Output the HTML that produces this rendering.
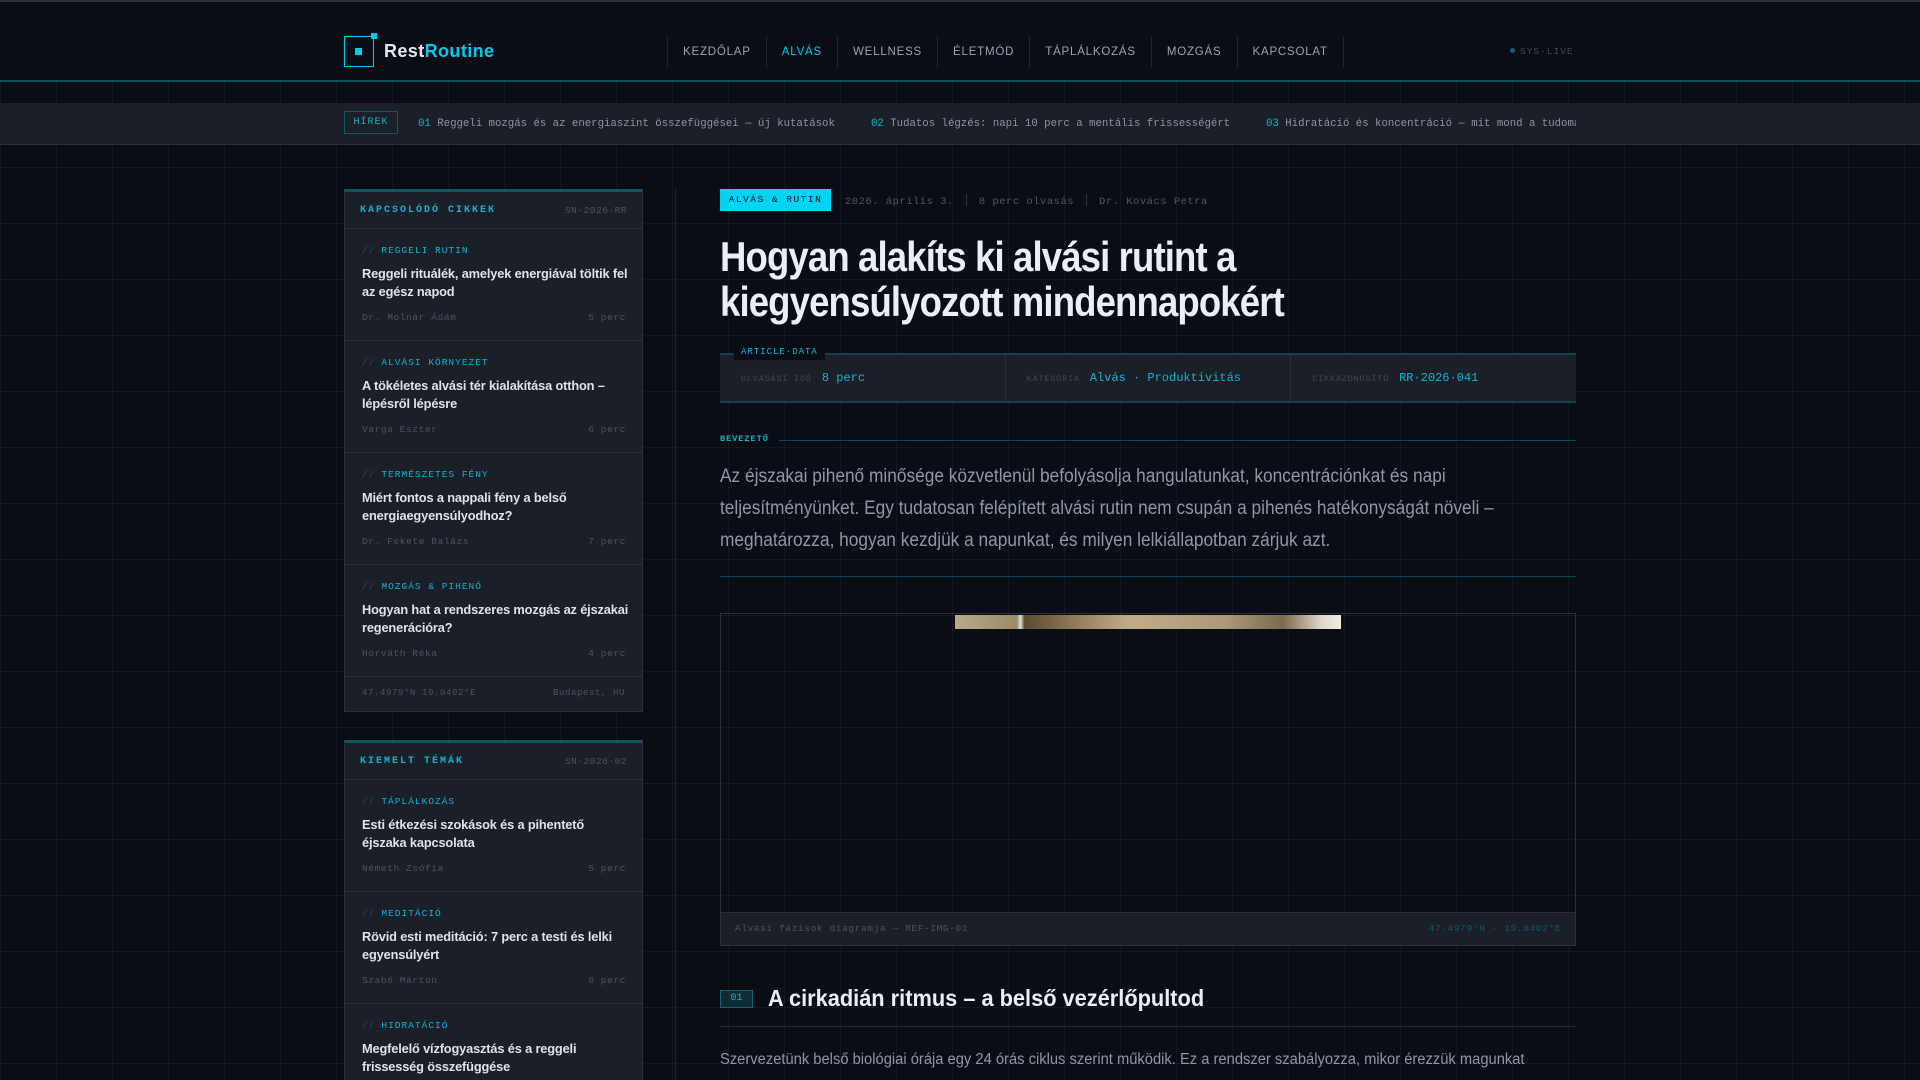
<!DOCTYPE html>
<html><head><meta charset="utf-8">
<style>
*{box-sizing:border-box;margin:0;padding:0}
html,body{width:1920px;height:1080px;overflow:hidden}
body{background-color:#0a0d14;background-image:linear-gradient(90deg,rgba(20,60,70,.28) 1px,transparent 1px),linear-gradient(0deg,rgba(20,60,70,.28) 1px,transparent 1px);background-size:56px 56px;font-family:"Liberation Sans",sans-serif;position:relative;color:#e6e8ef}
.mono{font-family:"Liberation Mono",monospace}
.abs{position:absolute}
.sx{transform-origin:0 0;white-space:nowrap}
#hdr{position:absolute;left:0;top:0;width:1920px;height:82px;background:#0a0d14;border-top:2px solid #2a3338;border-bottom:2px solid #0f4f5c}
.logo{position:absolute;left:344px;top:34px;width:30px;height:31px;border:1.5px solid #00cdec}
.logo:before{content:"";position:absolute;left:10px;top:11px;width:7px;height:7px;background:#00cdec}
.logo:after{content:"";position:absolute;right:-4px;top:-4px;width:6px;height:6px;background:#00cdec}
.brand{position:absolute;left:384px;top:39px;font-size:18px;font-weight:bold;letter-spacing:.4px;color:#e6e8ef}
.brand span{color:#00cdec}
nav{position:absolute;left:667px;top:34px;height:32px;display:flex}
nav a{display:block;height:32px;line-height:32px;padding:0 15px;border-left:1px solid #1e252c;font-size:11.5px;letter-spacing:.8px;color:#9aa4b2;text-decoration:none}
nav a:last-child{border-right:1px solid #1e252c}
nav a.on{color:#00cdec}
.sys{position:absolute;left:1510px;top:44px;font-size:9.5px;letter-spacing:1px;color:#3f4b56}
.sys:before{content:"";display:inline-block;width:5px;height:5px;border-radius:50%;background:#0f6170;margin-right:5px;vertical-align:1px}
#tick{position:absolute;left:0;top:103px;width:1920px;height:42px;background:#1b1f27;border-bottom:1px solid #2a3038}
.hirek{position:absolute;left:344px;top:8px;width:54px;height:23px;border:1px solid #0f5866;color:#12b3d0;font-size:10px;letter-spacing:1px;text-align:center;line-height:21px}
.tk{position:absolute;top:15px;font-size:10.7px;color:#8b95a3;white-space:nowrap}
.tk b{font-weight:normal;color:#00bcdc}
.vline{position:absolute;left:675px;top:189px;width:1px;height:900px;background:#1f262d}
.panel{position:absolute;left:344px;width:299px;background:#1b1f27;border:1px solid #2b3039;border-top:3px solid #0f5563}
.ph{height:37px;border-bottom:1px solid #2b3039;position:relative}
.ph .t{position:absolute;left:15px;top:13px;font-size:10px;letter-spacing:2px;color:#12b3d0;font-weight:bold}
.ph .r{position:absolute;right:15px;top:13px;font-size:9.5px;letter-spacing:.5px;color:#4a5360}
.it{height:112px;border-bottom:1px solid #2b3039;position:relative;padding:16px 14px 0 17px}
.it .c{font-size:9.5px;letter-spacing:1px;color:#12b3d0}
.it .c i{font-style:normal;color:#3c4550;margin-right:6px}
.it .h{margin-top:9px;font-size:12.8px;font-weight:bold;line-height:17.5px;color:#dfe2e9;letter-spacing:-.15px;white-space:nowrap}
.it .m{position:absolute;left:17px;right:16px;top:83px;font-size:9.5px;letter-spacing:.6px;color:#4a5360;display:flex;justify-content:space-between}
.pf{height:34px;position:relative;font-size:9px;letter-spacing:.6px;color:#4a5360}
.tag{position:absolute;left:720px;top:189px;width:111px;height:22px;background:#00d4f2;color:#0a0d14;font-size:9.5px;letter-spacing:1.5px;line-height:22px;text-align:center}
.meta{position:absolute;left:845px;top:194px;font-size:10.5px;color:#4d5663;letter-spacing:.5px;white-space:nowrap}
.meta span{display:inline-block;width:1px;height:12px;background:#2d3540;margin:0 12px;vertical-align:-2px}
h1{position:absolute;left:720px;top:234px;font-size:42px;line-height:45px;font-weight:bold;letter-spacing:-1px;color:#eceef5;transform:scaleX(.87)}
.ad{position:absolute;left:720px;top:353px;width:856px;height:50px;background:#1b1f27;border-top:2px solid #16414a;border-bottom:2px solid #16414a;display:flex}
.ad>div{flex:1;border-right:1px solid #2b3039;padding-left:21px;line-height:46px;font-size:12px;color:#12b3d0;white-space:nowrap}
.ad>div:last-child{border-right:none}
.ad small{font-size:8.5px;letter-spacing:.8px;color:#3f4854;margin-right:10px}
.adl{position:absolute;left:734px;top:344px;background:#0a0d14;padding:0 7px;font-size:9px;letter-spacing:1px;color:#12b3d0;line-height:16px}
.bev{position:absolute;left:720px;top:434px;font-size:8.5px;letter-spacing:1px;color:#12b3d0;font-weight:bold}
.bevl{position:absolute;left:779px;top:440px;width:797px;height:1px;background:#0f4854}
.intro{position:absolute;left:720px;top:461px;font-size:19px;line-height:32px;color:#8d97a8;transform:scaleX(.91)}
.div1{position:absolute;left:720px;top:576px;width:856px;height:1px;background:#0f4854}
.fig{position:absolute;left:720px;top:613px;width:856px;height:333px;border:1px solid #2a2f38}
.img{position:absolute;left:234px;top:1px;width:386px;height:14px;background:linear-gradient(90deg,#b9a98a 0,#9d8a6a 16%,#e4e0d6 17%,#5b4a34 18%,#8e7756 30%,#c2ac88 45%,#ad9878 70%,#7c6a50 85%,#e0d8c8 95%,#f0ece4 100%)}
.cap{position:absolute;left:0;bottom:0;width:854px;height:33px;background:#1b1f27;border-top:1px solid #2a2f38;font-size:9.5px;letter-spacing:.6px;line-height:32px;color:#4a5360;padding:0 14px}
.cap span{float:right;color:#0f5866}
.n01{position:absolute;left:720px;top:990px;width:33px;height:18px;border:1px solid #0f6575;background:#0d2c34;color:#12b3d0;font-size:10px;text-align:center;line-height:16px}
h2{position:absolute;left:768px;top:985px;font-size:23px;font-weight:bold;color:#eceef5;transform:scaleX(.947)}
.div2{position:absolute;left:720px;top:1026px;width:856px;height:1px;background:#232a31}
.p2{position:absolute;left:720px;top:1051px;font-size:15.5px;color:#8d97a8;transform:scaleX(.95)}
</style></head><body>
<div id="hdr">
<div class="logo"></div>
<div class="brand">Rest<span>Routine</span></div>
<nav><a>KEZDŐLAP</a><a class="on">ALVÁS</a><a>WELLNESS</a><a>ÉLETMÓD</a><a>TÁPLÁLKOZÁS</a><a>MOZGÁS</a><a>KAPCSOLAT</a></nav>
<div class="sys mono">SYS·LIVE</div>
</div>
<div id="tick">
<div class="hirek mono">HÍREK</div>
<div class="tk mono" style="left:418px"><b>01</b> Reggeli mozgás és az energiaszint összefüggései — új kutatások</div>
<div class="tk mono" style="left:871px"><b>02</b> Tudatos légzés: napi 10 perc a mentális frissességért</div>
<div class="tk mono" style="left:1266px;width:310px;overflow:hidden"><b>03</b> Hidratáció és koncentráció — mit mond a tudomány</div>
</div>
<div class="vline"></div>

<div class="panel" style="top:189px">
<div class="ph"><div class="t mono">KAPCSOLÓDÓ CIKKEK</div><div class="r mono">SN·2026·RR</div></div>
<div class="it"><div class="c mono"><i>//</i>REGGELI RUTIN</div><div class="h">Reggeli rituálék, amelyek energiával töltik fel<br>az egész napod</div><div class="m mono"><span>Dr. Molnár Ádám</span><span>5 perc</span></div></div>
<div class="it"><div class="c mono"><i>//</i>ALVÁSI KÖRNYEZET</div><div class="h">A tökéletes alvási tér kialakítása otthon –<br>lépésről lépésre</div><div class="m mono"><span>Varga Eszter</span><span>6 perc</span></div></div>
<div class="it"><div class="c mono"><i>//</i>TERMÉSZETES FÉNY</div><div class="h">Miért fontos a nappali fény a belső<br>energiaegyensúlyodhoz?</div><div class="m mono"><span>Dr. Fekete Balázs</span><span>7 perc</span></div></div>
<div class="it"><div class="c mono"><i>//</i>MOZGÁS &amp; PIHENŐ</div><div class="h">Hogyan hat a rendszeres mozgás az éjszakai<br>regenerációra?</div><div class="m mono"><span>Horváth Réka</span><span>4 perc</span></div></div>
<div class="pf mono"><span class="abs" style="left:17px;top:11px">47.4979°N 19.0402°E</span><span class="abs" style="right:17px;top:11px">Budapest, HU</span></div>
</div>

<div class="panel" style="top:740px;height:400px">
<div class="ph"><div class="t mono">KIEMELT TÉMÁK</div><div class="r mono">SN·2026·02</div></div>
<div class="it"><div class="c mono"><i>//</i>TÁPLÁLKOZÁS</div><div class="h">Esti étkezési szokások és a pihentető<br>éjszaka kapcsolata</div><div class="m mono"><span>Németh Zsófia</span><span>5 perc</span></div></div>
<div class="it"><div class="c mono"><i>//</i>MEDITÁCIÓ</div><div class="h">Rövid esti meditáció: 7 perc a testi és lelki<br>egyensúlyért</div><div class="m mono"><span>Szabó Márton</span><span>6 perc</span></div></div>
<div class="it"><div class="c mono"><i>//</i>HIDRATÁCIÓ</div><div class="h">Megfelelő vízfogyasztás és a reggeli<br>frissesség összefüggése</div></div>
</div>

<div class="tag mono">ALVÁS &amp; RUTIN</div>
<div class="meta mono">2026. április 3.<span></span>8 perc olvasás<span></span>Dr. Kovács Petra</div>
<h1 class="sx">Hogyan alakíts ki alvási rutint a<br>kiegyensúlyozott mindennapokért</h1>
<div class="ad mono">
<div><small>OLVASÁSI IDŐ</small>8 perc</div>
<div><small>KATEGÓRIA</small>Alvás · Produktivitás</div>
<div><small>CIKKAZONOSÍTÓ</small>RR·2026·041</div>
</div>
<div class="adl mono">ARTICLE·DATA</div>
<div class="bev mono">BEVEZETŐ</div><div class="bevl"></div>
<div class="intro sx">Az éjszakai pihenő minősége közvetlenül befolyásolja hangulatunkat, koncentrációnkat és napi<br>teljesítményünket. Egy tudatosan felépített alvási rutin nem csupán a pihenés hatékonyságát növeli –<br>meghatározza, hogyan kezdjük a napunkat, és milyen lelkiállapotban zárjuk azt.</div>
<div class="div1"></div>
<div class="fig"><div class="img"></div><div class="cap mono">Alvási fázisok diagramja — REF-IMG-01<span>47.4979°N · 19.0402°E</span></div></div>
<div class="n01 mono">01</div>
<h2 class="sx">A cirkadián ritmus – a belső vezérlőpultod</h2>
<div class="div2"></div>
<div class="p2 sx">Szervezetünk belső biológiai órája egy 24 órás ciklus szerint működik. Ez a rendszer szabályozza, mikor érezzük magunkat</div>
</body></html>
